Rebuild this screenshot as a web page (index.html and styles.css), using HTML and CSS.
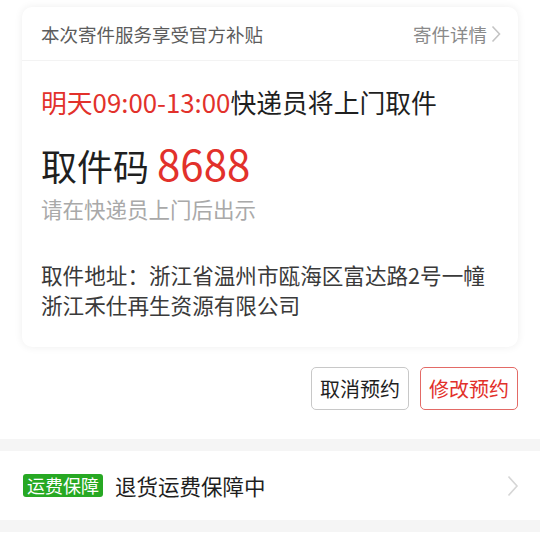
FILE: index.html
```html
<!DOCTYPE html>
<html lang="zh-CN">
<head>
    <meta charset="UTF-8">
    <title>寄件详情</title>
    <meta name="viewport" content="width=device-width, initial-scale=1.0">
    <link rel="stylesheet" href="styles.css">
</head>
<body>
    <div class="card">
        <div class="card-head">
            <span class="subsidy">本次寄件服务享受官方补贴</span>
            <span class="detail-link">寄件详情
                <svg class="chev" width="10" height="18" viewBox="0 0 10 18"><path d="M1.5 1.5 L8.5 9 L1.5 16.5" fill="none" stroke="#c4c4c4" stroke-width="1.6"/></svg>
            </span>
        </div>
        <div class="card-body">
            <p class="time"><span class="red">明天09:00-13:00</span>快递员将上门取件</p>
            <p class="code">取件码<span class="red code-num">8688</span></p>
            <p class="hint">请在快递员上门后出示</p>
            <p class="addr">取件地址：浙江省温州市瓯海区富达路2号一幢<br>浙江禾仕再生资源有限公司</p>
        </div>
    </div>

    <div class="actions">
        <button class="btn">取消预约</button>
        <button class="btn btn-red">修改预约</button>
    </div>

    <div class="gap"></div>

    <div class="row">
        <span class="badge">运费保障</span>
        <span class="row-text">退货运费保障中</span>
        <svg class="row-chev" width="12" height="22" viewBox="0 0 12 22"><path d="M1.5 1.5 L10 11 L1.5 20.5" fill="none" stroke="#d6d6d6" stroke-width="1.6"/></svg>
    </div>

    <div class="gap"></div>
</body>
</html>
```

FILE: styles.css
```css
:root {
    --red: #e2312b;
    --text: #1f1f1f;
    --grey-text: #5c5c5c;
    --light: #a9a9a9;
    --band: #f5f5f5;
}
body {
    font-family: "Noto Sans CJK SC", "Noto Sans", sans-serif;
    background-color: #fff;
    color: var(--text);
    margin: 0;
}
p {
    margin: 0;
}
.red {
    color: var(--red);
}
.card {
    margin: 7px 22px 0;
    border-radius: 10px;
    background-color: #fff;
    box-shadow: 0 0 8px rgba(0,0,0,0.07);
}
.card-head {
    height: 53px;
    padding: 0 17px 0 19px;
    display: flex;
    align-items: center;
    justify-content: space-between;
    border-bottom: 1px solid #f3f3f3;
    font-size: 18.5px;
}
.subsidy {
    color: var(--grey-text);
}
.detail-link {
    color: #8a8a8a;
    display: flex;
    align-items: center;
    gap: 4px;
}
.card-body {
    padding: 24px 19px 27px;
}
.time {
    font-size: 25.8px;
    line-height: 34px;
}
.code {
    margin-top: 21px;
    font-size: 36px;
    line-height: 46px;
}
.code-num {
    margin-left: 8px;
    font-size: 42px;
}
.hint {
    margin-top: 6px;
    font-size: 21.5px;
    line-height: 30px;
    color: var(--light);
}
.addr {
    margin-top: 36px;
    font-size: 21.6px;
    line-height: 30px;
    color: #3a3a3a;
}
.actions {
    display: flex;
    justify-content: flex-end;
    gap: 11px;
    padding: 20px 22px 29px;
}
.btn {
    font-family: inherit;
    font-size: 20px;
    width: 98px;
    height: 43px;
    padding: 0;
    background-color: #fff;
    color: var(--text);
    border: 1px solid #c8c8c8;
    border-radius: 5px;
}
.btn-red {
    color: var(--red);
    border-color: #e36a66;
}
.gap {
    height: 12px;
    background-color: var(--band);
}
.row {
    height: 69px;
    padding: 0 21px 0 23px;
    display: flex;
    align-items: center;
}
.badge {
    background-color: #27a823;
    color: #fff;
    font-size: 18px;
    line-height: 23px;
    padding: 0 4px;
    border-radius: 3px;
}
.row-text {
    margin-left: 12px;
    font-size: 21.5px;
    flex: 1;
}
```
